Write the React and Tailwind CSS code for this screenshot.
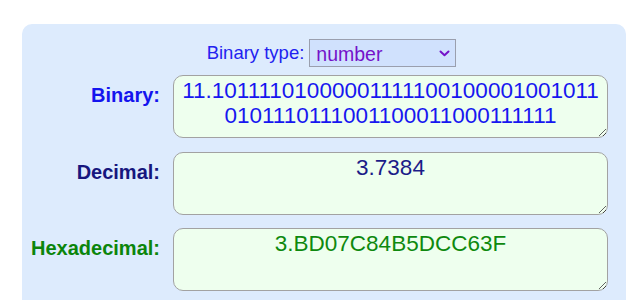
import { useState } from 'react'

const BINARY = '11.10111101000001111100100001001011\n0101110111001100011000111111'

const rows = [
  { label: 'Binary:', value: BINARY, labelColor: 'text-[#1414ee]', textColor: 'text-[#1717f0]' },
  { label: 'Decimal:', value: '3.7384', labelColor: 'text-[#16167e]', textColor: 'text-[#1c1c88]' },
  { label: 'Hexadecimal:', value: '3.BD07C84B5DCC63F', labelColor: 'text-[#0b850b]', textColor: 'text-[#0e890e]' },
]

const App = () => {
  const [type, setType] = useState('number')

  return (
    <div className="min-h-[300px] bg-white pt-[24px] pl-[22px] pr-[14px] font-['Liberation_Sans',Arial,sans-serif]">
      <div className="rounded-[10px] bg-[#ddebfd] pt-[15px] pb-[30px] pr-[18px]">
        <div className="flex items-center justify-center pl-[33px] h-[28px]">
          <span className="text-[18.5px] text-[#2222f0] mr-[5px]">Binary type:</span>
          <div className="relative">
            <select
              value={type}
              onChange={(e) => setType(e.target.value)}
              className="appearance-none w-[147px] h-[28px] border border-[#9a9fae] bg-[#d0e1fd] pl-[6px] text-[19.5px] text-[#7412c9] outline-none"
            >
              <option value="number">number</option>
              <option value="signed">signed</option>
              <option value="float">float</option>
            </select>
            <svg
              className="pointer-events-none absolute right-[6px] top-[11px]"
              width="11"
              height="7"
              viewBox="0 0 11 7"
              fill="none"
            >
              <path d="M1.5 1.5 L5.5 5.2 L9.5 1.5" stroke="#7412c9" strokeWidth="2" strokeLinecap="round" strokeLinejoin="round" />
            </svg>
          </div>
        </div>

        <div className="mt-[8px] flex flex-col gap-[13.5px]">
          {rows.map((row) => (
            <div key={row.label} className="flex items-start">
              <label className={`w-[138px] shrink-0 text-right pt-[5px] text-[20px] font-bold ${row.labelColor}`}>
                {row.label}
              </label>
              <textarea
                readOnly
                value={row.value}
                className={`ml-[13px] w-[435px] h-[63px] rounded-[10px] border border-[#a2a2a2] bg-[#eeffee] px-[4px] pt-[2px] text-center text-[22.5px] leading-[25px] outline-none ${row.textColor}`}
              />
            </div>
          ))}
        </div>
      </div>
    </div>
  )
}

export default App
